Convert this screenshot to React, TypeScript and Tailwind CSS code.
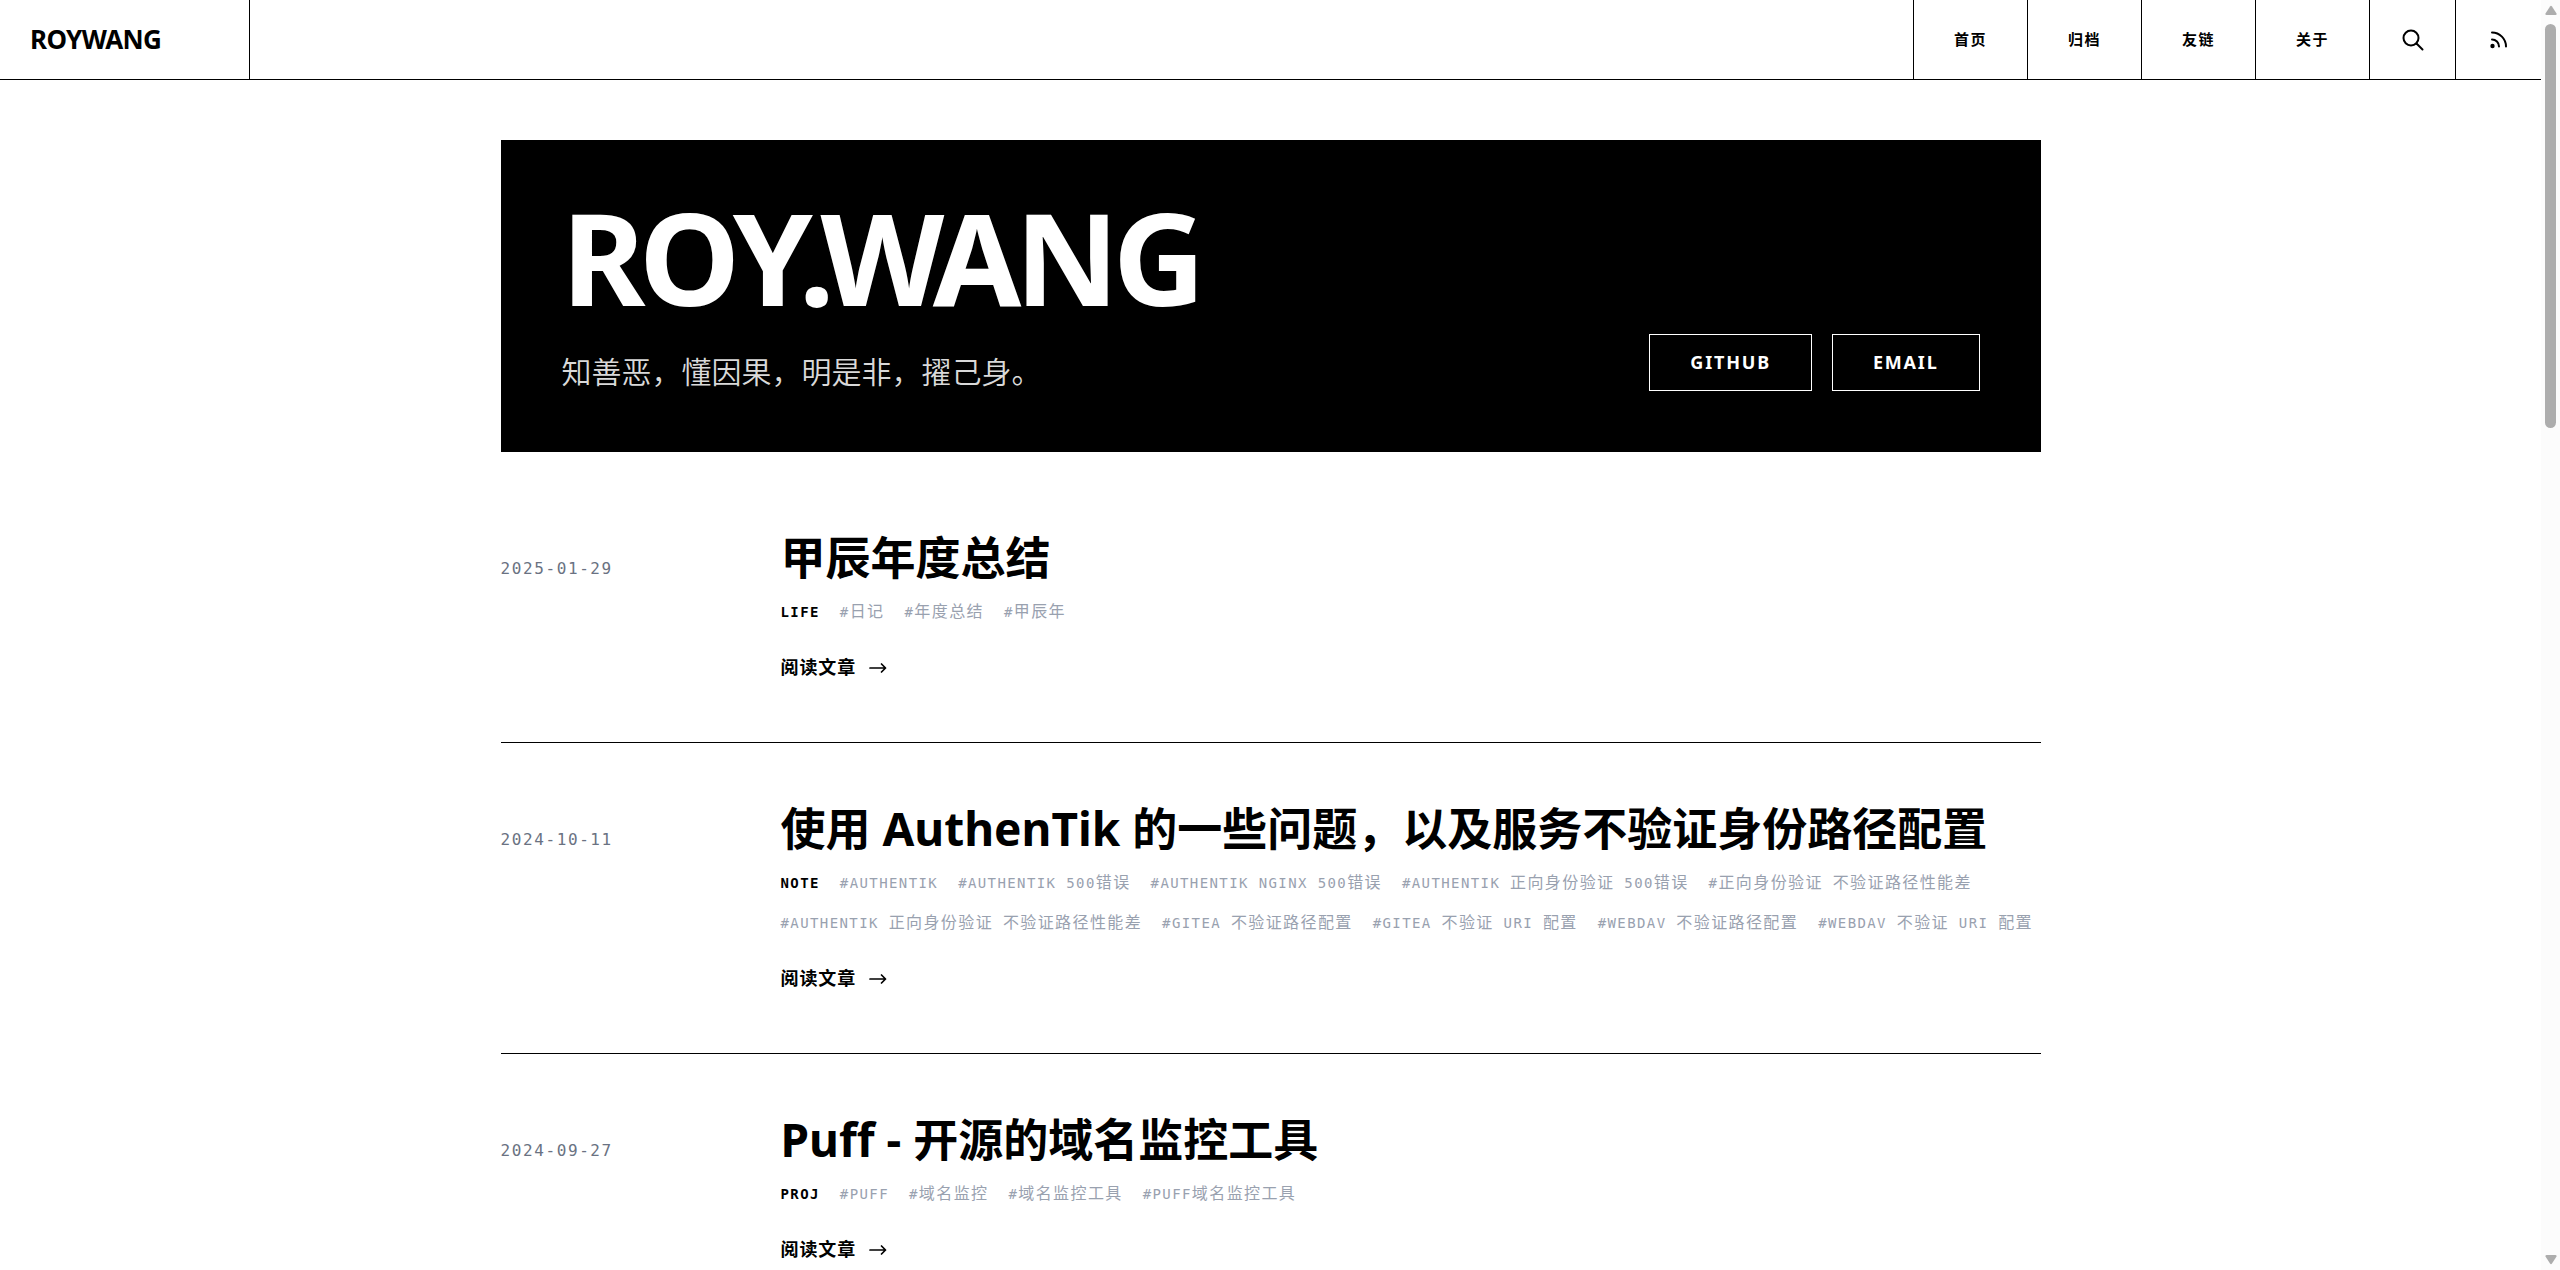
import React from "react";

const SANS = "font-['Noto_Sans','Noto_Sans_CJK_SC',sans-serif]";
const MONO = "font-['DejaVu_Sans_Mono','Noto_Sans_CJK_SC',monospace]";

type Article = {
  date: string;
  title: string;
  category: string;
  tags: string[];
};

const articles: Article[] = [
  {
    date: "2025-01-29",
    title: "甲辰年度总结",
    category: "Life",
    tags: ["日记", "年度总结", "甲辰年"],
  },
  {
    date: "2024-10-11",
    title: "使用 AuthenTik 的一些问题，以及服务不验证身份路径配置",
    category: "Note",
    tags: [
      "AuthenTik",
      "AuthenTik 500错误",
      "AuthenTik Nginx 500错误",
      "AuthenTik 正向身份验证 500错误",
      "正向身份验证 不验证路径性能差",
      "AuthenTik 正向身份验证 不验证路径性能差",
      "Gitea 不验证路径配置",
      "Gitea 不验证 URI 配置",
      "WebDav 不验证路径配置",
      "WebDav 不验证 URI 配置",
    ],
  },
  {
    date: "2024-09-27",
    title: "Puff - 开源的域名监控工具",
    category: "Proj",
    tags: ["Puff", "域名监控", "域名监控工具", "Puff域名监控工具"],
  },
];

const navItems = ["首页", "归档", "友链", "关于"];

/* Splits a string into Han and Latin runs so each script gets its own size. */
function Mixed({ text, han, latin }: { text: string; han?: string; latin?: string }) {
  const runs = text.match(/[\u3000-\u9fff\uff00-\uffef]+|[^\u3000-\u9fff\uff00-\uffef]+/g) ?? [];
  return (
    <>
      {runs.map((run, i) => (
        <span key={i} className={/[\u3000-\u9fff\uff00-\uffef]/.test(run) ? han : latin}>
          {run}
        </span>
      ))}
    </>
  );
}

function SearchIcon() {
  return (
    <svg className="size-6" viewBox="0 0 24 24" fill="none" stroke="currentColor" strokeWidth="2" strokeLinecap="round" strokeLinejoin="round" aria-hidden="true">
      <circle cx="10" cy="10" r="7.5" />
      <path d="M15.5 15.5 21.5 21.5" />
    </svg>
  );
}

function RssIcon() {
  return (
    <svg className="size-6" viewBox="0 0 24 24" fill="none" stroke="currentColor" strokeWidth="2" strokeLinecap="round" aria-hidden="true">
      <path d="M5 11.5a7 7 0 0 1 7 7M5 4.5a14 14 0 0 1 14 14" />
      <circle cx="5.500" cy="18" r="2.200" fill="currentColor" stroke="none" />
    </svg>
  );
}

function ArrowIcon() {
  return (
    <svg className="size-5" viewBox="0 0 20 20" fill="none" stroke="currentColor" strokeWidth="1.700" strokeLinecap="round" strokeLinejoin="round" aria-hidden="true">
      <path d="M2 10h15.500M13.500 6l4 4-4 4" />
    </svg>
  );
}

function Header() {
  return (
    <header className="flex h-20 items-stretch justify-between border-b border-black">
      <a href="#" className="flex w-[250px] items-center border-r border-black pl-[30px] text-[26px] font-bold tracking-tight">
        ROYWANG
      </a>
      <nav className="flex items-stretch" aria-label="主导航">
        {navItems.map((item) => (
          <a key={item} href="#" className="flex items-center border-l border-black px-10 text-[15px] font-bold tracking-widest">
            {item}
          </a>
        ))}
        <button type="button" aria-label="搜索" className="flex w-[86px] items-center justify-center border-l border-black">
          <SearchIcon />
        </button>
        <a href="#" aria-label="RSS" className="flex w-[86px] items-center justify-center border-l border-black">
          <RssIcon />
        </a>
      </nav>
    </header>
  );
}

function Hero() {
  return (
    <section className="flex items-end justify-between border border-black bg-black p-[60px] text-white">
      <div>
        <h1 className="text-[128px] leading-[112px] font-bold tracking-tighter">ROY.WANG</h1>
        <p className="mt-10 text-[30px] leading-[38px] font-[350] text-[#d9d9d9]">知善恶，懂因果，明是非，擢己身。</p>
      </div>
      <div className="flex gap-5">
        {["GITHUB", "EMAIL"].map((label) => (
          <a key={label} href="#" className="border border-white px-10 py-[15px] text-lg leading-[25px] font-bold tracking-widest">
            {label}
          </a>
        ))}
      </div>
    </section>
  );
}

function ArticleRow({ article }: { article: Article }) {
  return (
    <article className="grid grid-cols-[280px_1fr] border-b border-black pt-[60px] pb-[62px]">
      <time dateTime={article.date} className={`pt-6 text-base leading-[25px] tracking-widest text-gray-500 ${MONO}`}>
        {article.date}
      </time>
      <div>
        <h2 className="text-[45px] leading-[52px] font-bold">
          <a href="#">
            <Mixed text={article.title} latin="text-[46px] leading-none" />
          </a>
        </h2>
        <div className={`mt-[18px] flex flex-wrap gap-5 text-sm leading-5 tracking-widest text-gray-400 uppercase ${MONO}`}>
          <span className="font-bold text-black">{article.category}</span>
          {article.tags.map((tag) => (
            <a key={tag} href="#" className="h-5 whitespace-pre">
              <Mixed text={`#${tag}`} han="text-base leading-none" />
            </a>
          ))}
        </div>
        <a href="#" className="mt-[33px] flex w-fit items-center gap-3 text-lg leading-[25px] font-bold tracking-wider">
          阅读文章
          <ArrowIcon />
        </a>
      </div>
    </article>
  );
}

function PageScrollbar() {
  return (
    <div className="flex h-screen w-[19px] shrink-0 flex-col items-center gap-2 bg-[#fcfcfc] py-1 text-[#adadad]" aria-hidden="true">
      <svg className="w-3 shrink-0" viewBox="0 0 12 12" fill="currentColor">
        <path d="M5 2.500Q6 1 7 2.500L11.500 9.500Q12 11 10.500 11H1.500Q0 11 .5 9.500Z" />
      </svg>
      <div className="h-[32%] w-[11px] rounded-full bg-[#adadad]" />
      <svg className="mt-auto w-3 shrink-0" viewBox="0 0 12 12" fill="currentColor">
        <path d="M5 9.500Q6 11 7 9.500L11.500 2.500Q12 1 10.500 1H1.500Q0 1 .5 2.500Z" />
      </svg>
    </div>
  );
}

export default function App() {
  return (
    <div lang="zh-CN" className={`flex h-screen overflow-hidden bg-white text-black ${SANS}`}>
      <div className="min-w-0 flex-1">
        <Header />
        <main className="mx-auto max-w-[1540px] pt-[60px]">
          <Hero />
          <div className="mt-5">
            {articles.map((article) => (
              <ArticleRow key={article.date} article={article} />
            ))}
          </div>
        </main>
      </div>
      <PageScrollbar />
    </div>
  );
}
